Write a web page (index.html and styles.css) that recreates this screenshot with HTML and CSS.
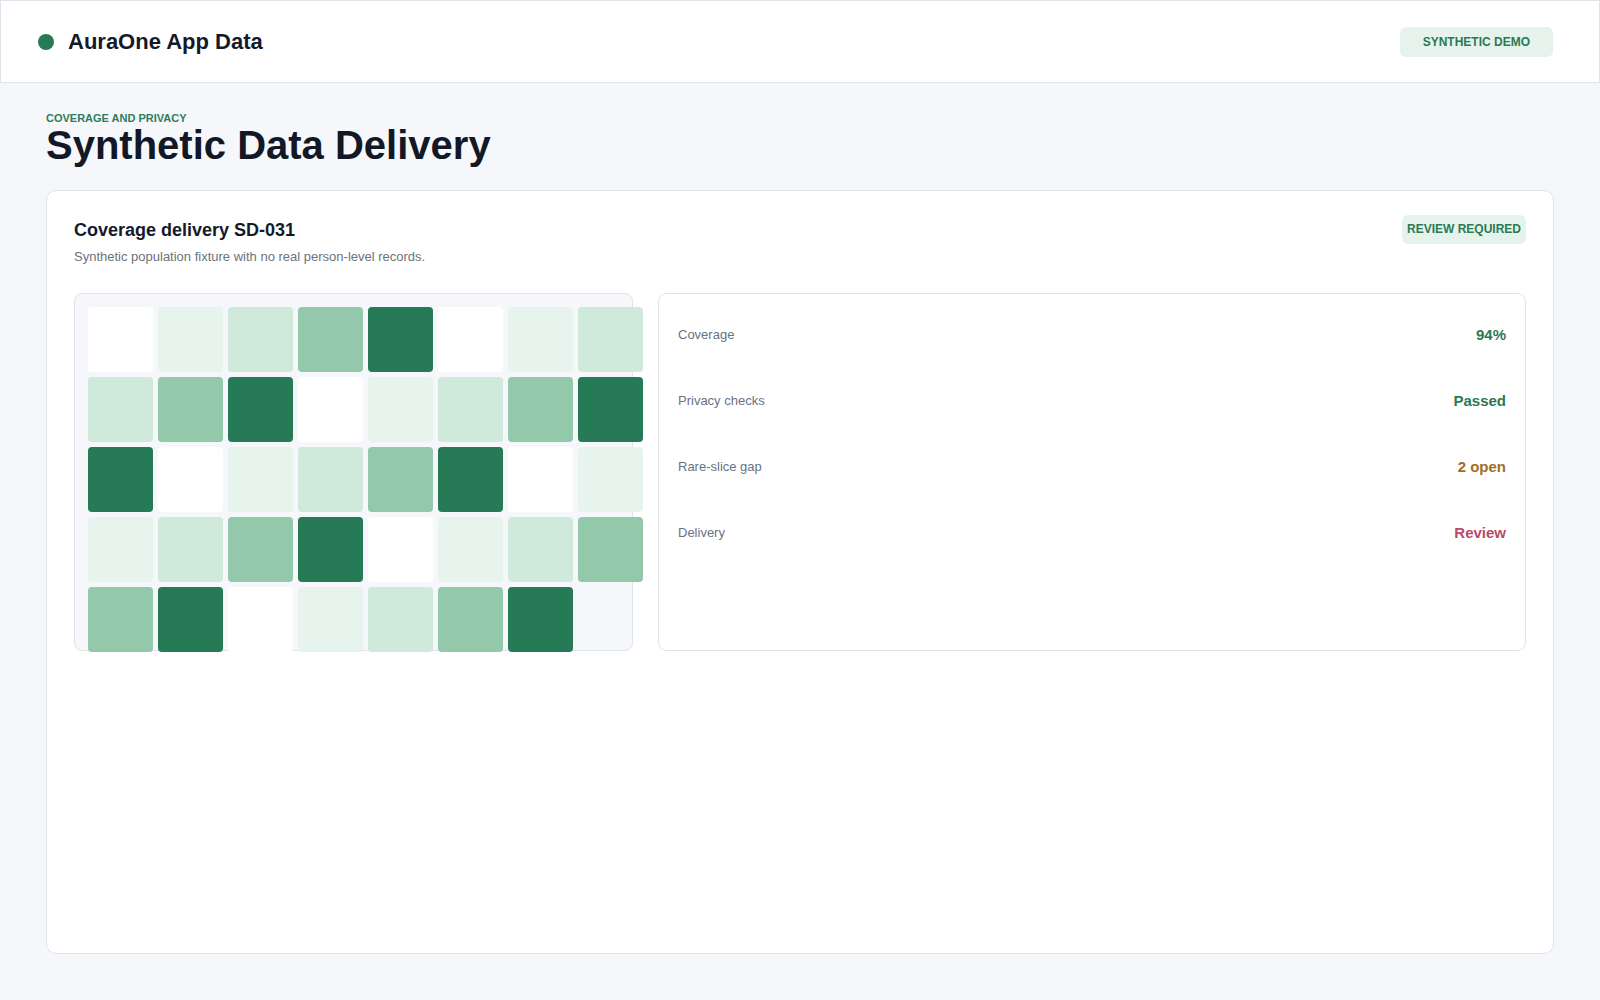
FILE: index.html
```html
<!DOCTYPE html>
<html lang="en">
<head>
  <meta charset="UTF-8">
  <meta name="viewport" content="width=device-width, initial-scale=1.0">
  <title>AuraOne App Data</title>
  <link rel="stylesheet" href="styles.css">
</head>
<body>
  <header class="topbar">
    <div class="brand">
      <span class="brand-dot"></span>
      <span class="brand-name">AuraOne App Data</span>
    </div>
    <span class="pill">Synthetic demo</span>
  </header>

  <main class="page">
    <p class="eyebrow">Coverage and privacy</p>
    <h1>Synthetic Data Delivery</h1>

    <section class="card">
      <div class="card-head">
        <div>
          <h2>Coverage delivery SD-031</h2>
          <p class="card-sub">Synthetic population fixture with no real person-level records.</p>
        </div>
        <span class="pill pill-sm">Review required</span>
      </div>

      <div class="panels">
        <div class="heatmap">
          <div class="cell l0"></div><div class="cell l1"></div><div class="cell l2"></div><div class="cell l3"></div>
          <div class="cell l4"></div><div class="cell l0"></div><div class="cell l1"></div><div class="cell l2"></div>

          <div class="cell l2"></div><div class="cell l3"></div><div class="cell l4"></div><div class="cell l0"></div>
          <div class="cell l1"></div><div class="cell l2"></div><div class="cell l3"></div><div class="cell l4"></div>

          <div class="cell l4"></div><div class="cell l0"></div><div class="cell l1"></div><div class="cell l2"></div>
          <div class="cell l3"></div><div class="cell l4"></div><div class="cell l0"></div><div class="cell l1"></div>

          <div class="cell l1"></div><div class="cell l2"></div><div class="cell l3"></div><div class="cell l4"></div>
          <div class="cell l0"></div><div class="cell l1"></div><div class="cell l2"></div><div class="cell l3"></div>

          <div class="cell l3"></div><div class="cell l4"></div><div class="cell l0"></div><div class="cell l1"></div>
          <div class="cell l2"></div><div class="cell l3"></div><div class="cell l4"></div>
        </div>

        <dl class="stats">
          <div class="stat">
            <dt>Coverage</dt>
            <dd class="ok">94%</dd>
          </div>
          <div class="stat">
            <dt>Privacy checks</dt>
            <dd class="ok">Passed</dd>
          </div>
          <div class="stat">
            <dt>Rare-slice gap</dt>
            <dd class="warn">2 open</dd>
          </div>
          <div class="stat">
            <dt>Delivery</dt>
            <dd class="bad">Review</dd>
          </div>
        </dl>
      </div>
    </section>
  </main>
</body>
</html>
```

FILE: styles.css
```css
* {
  box-sizing: border-box;
}
html, body {
  height: 100%;
}
body {
  margin: 0;
  display: flex;
  flex-direction: column;
  font-family: "Liberation Sans", Arial, sans-serif;
  color: #141a2a;
  background: #f5f7fa;
}
.topbar {
  display: flex;
  align-items: center;
  justify-content: space-between;
  height: 83px;
  flex-shrink: 0;
  padding: 0 46px 0 37px;
  background: #fff;
  border: 1px solid #dfe4ea;
}
.brand {
  display: flex;
  align-items: center;
  gap: 14px;
}
.brand-dot {
  width: 16px;
  height: 16px;
  border-radius: 50%;
  background: #277a56;
}
.brand-name {
  font-size: 22px;
  font-weight: 700;
}
.pill {
  padding: 9px 23px 8px;
  border-radius: 6px;
  background: #e6f3ec;
  color: #2a7a55;
  font-size: 12px;
  line-height: 13px;
  font-weight: 700;
  text-transform: uppercase;
}
.pill-sm {
  padding: 8px 5px;
}
.page {
  flex: 1;
  display: flex;
  flex-direction: column;
  padding: 28px 46px 46px;
}
.eyebrow {
  margin: 0;
  font-size: 11px;
  line-height: 14px;
  font-weight: 700;
  color: #2f7d5a;
  text-transform: uppercase;
}
h1 {
  margin: 0 0 25px;
  font-size: 40px;
  line-height: 40px;
  font-weight: 700;
  color: #121826;
}
.card {
  flex: 1;
  padding: 24px 27px;
  background: #fff;
  border: 1px solid #dfe4ea;
  border-radius: 10px;
}
.card-head {
  display: flex;
  justify-content: space-between;
  align-items: flex-start;
  margin-bottom: 27px;
}
h2 {
  margin: 0;
  font-size: 18px;
  line-height: 30px;
  font-weight: 700;
}
.card-sub {
  margin: 3px 0 0;
  font-size: 13px;
  line-height: 18px;
  color: #6b7280;
}
/* fixed-height row; the heatmap grid is allowed to spill past its panel */
.panels {
  display: grid;
  grid-template-columns: 559px 1fr;
  grid-template-rows: 358px;
  gap: 25px;
}
.heatmap {
  display: grid;
  grid-template-columns: repeat(8, 65px);
  grid-auto-rows: 65px;
  gap: 5px;
  align-content: start;
  min-height: 0;
  padding: 13px;
  background: #f5f7fa;
  border: 1px solid #dde4ea;
  border-radius: 8px;
}
.cell {
  border-radius: 4px;
}
.l0 { background: #ffffff; }
.l1 { background: #e7f4ed; }
.l2 { background: #cfe9da; }
.l3 { background: #93c9aa; }
.l4 { background: #277a56; }
.stats {
  display: flex;
  flex-direction: column;
  gap: 26px;
  margin: 0;
  padding: 20px 19px;
  background: #fff;
  border: 1px solid #dde4ea;
  border-radius: 8px;
}
.stat {
  display: flex;
  align-items: center;
  justify-content: space-between;
  min-height: 40px;
}
.stat dt {
  font-size: 13px;
  color: #6b7280;
}
.stat dd {
  margin: 0;
  font-size: 15px;
  font-weight: 700;
}
.ok { color: #2a7a55; }
.warn { color: #a36d1f; }
.bad { color: #b94a69; }
```
